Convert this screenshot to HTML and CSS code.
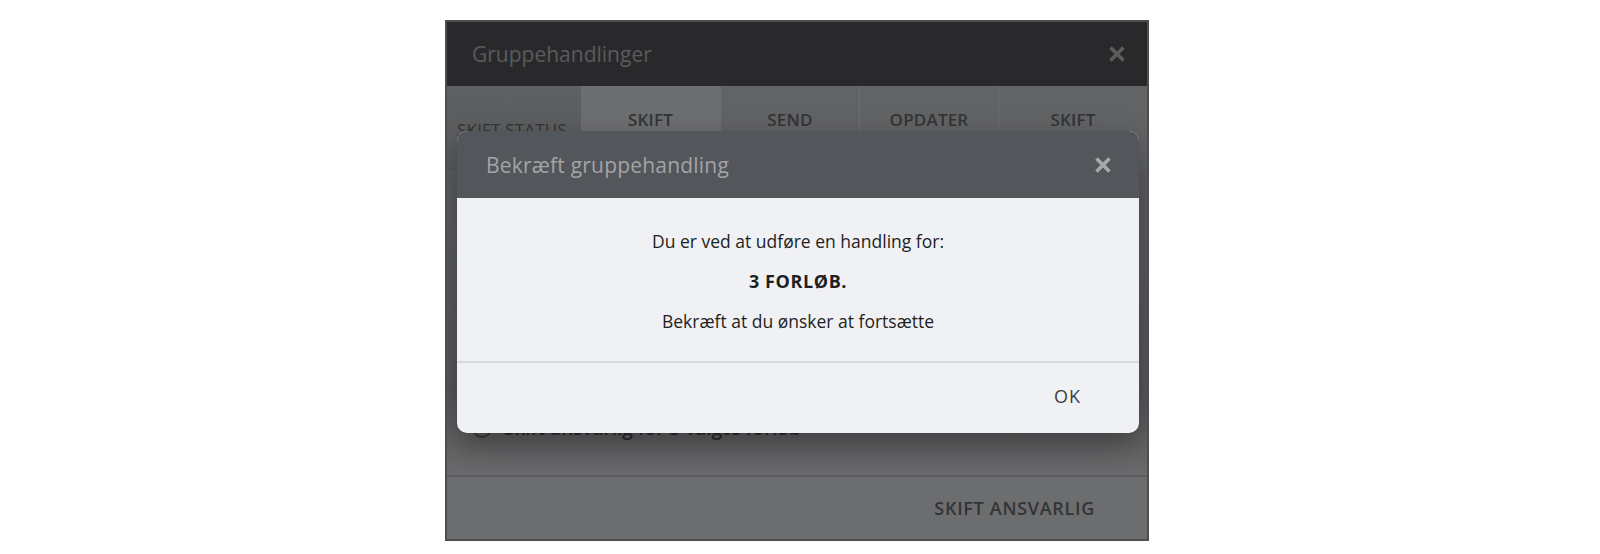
FILE: index.html
```html
<!DOCTYPE html>
<html lang="da">
<head>
<meta charset="utf-8">
<title>Gruppehandlinger</title>
<link rel="stylesheet" href="styles.css">
</head>
<body>
<div class="modal">
  <div class="modal-header">
    <span class="modal-title">Gruppehandlinger</span>
    <svg class="modal-close" width="18" height="18" viewBox="0 0 18 18" aria-hidden="true"><path d="M2.5 2.5 L15.5 15.5 M15.5 2.5 L2.5 15.5" stroke="currentColor" stroke-width="3.6" fill="none"/></svg>
  </div>
  <div class="tabs">
    <div class="tab tab-first">SKIFT STATUS</div>
    <div class="tab tab-active">SKIFT</div>
    <div class="tab tab-w139">SEND</div>
    <div class="tab">OPDATER</div>
    <div class="tab tab-last">SKIFT</div>
  </div>
  <div class="modal-body">
    <label class="radio-row"><span class="radio"></span><span class="radio-label">Skift ansvarlig for 3 valgte forløb</span></label>
  </div>
  <div class="modal-footer">
    <span class="footer-btn">SKIFT ANSVARLIG</span>
  </div>

  <div class="dialog">
    <div class="dialog-header">
      <span class="dialog-title">Bekræft gruppehandling</span>
      <svg class="dialog-close" width="18" height="18" viewBox="0 0 18 18" aria-hidden="true"><path d="M2.5 2.5 L15.5 15.5 M15.5 2.5 L2.5 15.5" stroke="currentColor" stroke-width="3.6" fill="none"/></svg>
    </div>
    <div class="dialog-body">
      <p class="line">Du er ved at udføre en handling for:</p>
      <p class="line strong">3 FORLØB.</p>
      <p class="line">Bekræft at du ønsker at fortsætte</p>
    </div>
    <div class="dialog-footer">
      <span class="ok-btn">OK</span>
    </div>
  </div>
</div>
</body>
</html>
```
FILE: styles.css
```css
html, body {
  margin: 0;
  padding: 0;
  background: #ffffff;
  font-family: "Open Sans", "Noto Sans", sans-serif;
}

body {
  padding-top: 20px;
  padding-left: 445px;
}

.modal {
  position: relative;
  width: 700px;
  height: 517px;
  border: 2px solid #4e4e50;
  background: #636466;
  display: flex;
  flex-direction: column;
  overflow: hidden;
}

.modal-header {
  height: 64px;
  background: #29292b;
  display: flex;
  align-items: center;
  justify-content: space-between;
  padding: 0 21px 0 25px;
  flex: none;
}

.modal-title {
  font-size: 21px;
  color: #5a5b5d;
}

.modal-close {
  color: #5c5c5e;
  display: block;
}

.tabs {
  display: flex;
  height: 84px;
  flex: none;
}

.tab {
  flex: 0 0 139px;
  background: #626365;
  border-left: 1px solid #6d6e70;
  color: #333436;
  font-size: 17px;
  font-weight: 600;
  text-align: center;
  line-height: 22px;
  padding-top: 23px;
  box-sizing: border-box;
  letter-spacing: 0.2px;
}

.tab-w139 {
  flex-basis: 139px;
}

.tab-last {
  flex: 1 1 auto;
}

.tab-first {
  flex: 0 0 134px;
  border-left: none;
  text-align: left;
  padding-left: 10px;
  padding-top: 33px;
  font-weight: 400;
  white-space: nowrap;
  background: linear-gradient(#5f6062, #5a5b5d);
}

.tab-active {
  background: #6d6e70;
  border-left: none;
}

.modal-body {
  flex: 1;
  background: linear-gradient(#5e5f61 0%, #57585a 72%, #6a6a6c 100%);
  display: flex;
  align-items: flex-end;
  padding: 0 24px 36px 25px;
}

.radio-row {
  display: flex;
  align-items: center;
  gap: 12px;
}

.radio {
  width: 20px;
  height: 20px;
  border: 2px solid #3a3a3c;
  border-radius: 50%;
  box-sizing: border-box;
}

.radio-label {
  font-size: 19px;
  font-weight: 600;
  color: #2a2a2c;
  line-height: 22px;
}

.modal-footer {
  height: 62px;
  flex: none;
  border-top: 2px solid #5e5e60;
  background: #6c6d6f;
  display: flex;
  align-items: center;
  justify-content: flex-end;
  padding-right: 52px;
}

.footer-btn {
  font-size: 18px;
  font-weight: 600;
  color: #333436;
  letter-spacing: 0.7px;
}

.dialog {
  position: absolute;
  left: 10px;
  top: 109px;
  width: 682px;
  height: 302px;
  border-radius: 10px;
  overflow: hidden;
  background: #f0f1f5;
  box-shadow: 0 12px 30px rgba(0, 0, 0, 0.35);
  display: flex;
  flex-direction: column;
}

.dialog-header {
  height: 67px;
  flex: none;
  background: #53565a;
  display: flex;
  align-items: center;
  justify-content: space-between;
  padding: 0 27px 0 29px;
}

.dialog-title {
  font-size: 21px;
  color: #a3a4a7;
  letter-spacing: 0.2px;
}

.dialog-close {
  color: #a7a8aa;
  display: block;
}

.dialog-body {
  height: 165px;
  flex: none;
  border-bottom: 2px solid #d9dadd;
  display: flex;
  flex-direction: column;
  align-items: center;
  padding-top: 31px;
  box-sizing: border-box;
  gap: 16px;
}

.line {
  margin: 0;
  font-size: 17.5px;
  line-height: 24px;
  color: #1f1f21;
}

.line.strong {
  font-weight: 700;
  font-size: 18px;
  letter-spacing: 0.6px;
}

.dialog-footer {
  flex: 1;
  display: flex;
  align-items: center;
  justify-content: flex-end;
  padding-right: 58px;
  padding-bottom: 4px;
}

.ok-btn {
  font-size: 18px;
  font-weight: 500;
  color: #3d3e40;
  letter-spacing: 1px;
}
```
